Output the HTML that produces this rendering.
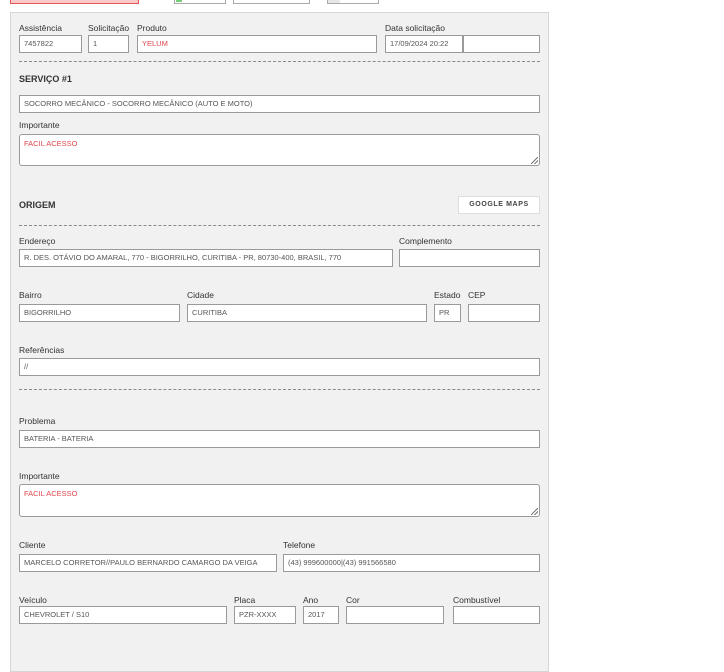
<!DOCTYPE html>
<html><head><meta charset="utf-8">
<style>
*{box-sizing:border-box;margin:0;padding:0}
body{width:724px;height:664px;background:#fff;position:relative;overflow:hidden;font-family:"Liberation Sans",sans-serif;color:#333}
.a{position:absolute}
.panel{left:10px;top:12px;width:539px;height:660px;background:#f1f1f1;border:1px solid #d6d6d6}
.l{position:absolute;font-size:8.5px;color:#333;line-height:10px;white-space:nowrap}
.i{position:absolute;height:18px;background:#fff;border:1px solid #9a9a9a;font-size:7.5px;line-height:16px;padding-left:4px;color:#555;white-space:nowrap;overflow:hidden}
.t{position:absolute;background:#fff;border:1px solid #9a9a9a;border-radius:3px;font-size:7.5px;padding:4px 4px;color:#e0474c}
.d{position:absolute;left:19px;width:521px;border-top:1px dashed #8a8a8a}
.h{position:absolute;font-size:9px;font-weight:bold;color:#333}
.red{color:#e0474c}
.grip{position:absolute;right:1px;bottom:1px;width:7px;height:7px;background:linear-gradient(135deg,transparent 45%,#777 45%,#777 55%,transparent 55%,transparent 70%,#777 70%,#777 80%,transparent 80%)}
</style></head><body>
<div class="a" style="left:10px;top:-2px;width:129px;height:6px;background:#f9c9c9;border:1px solid #e05555"></div>
<div class="a" style="left:174px;top:-2px;width:52px;height:6px;background:#fff;border:1px solid #aaa"></div>
<div class="a" style="left:176px;top:-2px;width:6px;height:4px;background:#7c7"></div>
<div class="a" style="left:233px;top:-2px;width:77px;height:6px;background:#fff;border:1px solid #aaa"></div>
<div class="a" style="left:327px;top:-2px;width:52px;height:6px;background:#fff;border:1px solid #aaa"></div>
<div class="a" style="left:328px;top:-2px;width:12px;height:5px;background:#e6e6e6"></div>
<div class="a panel"></div>

<div class="l" style="left:19px;top:23px">Assistência</div>
<div class="l" style="left:88px;top:23px">Solicitação</div>
<div class="l" style="left:137px;top:23px">Produto</div>
<div class="l" style="left:385px;top:23px">Data solicitação</div>
<div class="i" style="left:19px;top:35px;width:63px">7457822</div>
<div class="i" style="left:88px;top:35px;width:41px">1</div>
<div class="i red" style="left:137px;top:35px;width:240px;color:#e0474c">YELUM</div>
<div class="i" style="left:385px;top:35px;width:78px">17/09/2024 20:22</div>
<div class="i" style="left:463px;top:35px;width:77px"></div>
<div class="d" style="top:61px"></div>

<div class="h" style="left:19px;top:74px">SERVIÇO #1</div>
<div class="i" style="left:19px;top:95px;width:521px">SOCORRO MECÂNICO - SOCORRO MECÂNICO (AUTO E MOTO)</div>
<div class="l" style="left:19px;top:120px">Importante</div>
<div class="t" style="left:19px;top:134px;width:521px;height:32px">FACIL ACESSO<div class="grip"></div></div>

<div class="h" style="left:19px;top:200px">ORIGEM</div>
<div class="a" style="left:458px;top:196px;width:82px;height:18px;background:#fff;border:1px solid #ddd;font-size:7px;font-weight:bold;letter-spacing:0.6px;text-align:center;line-height:16px;color:#444">GOOGLE MAPS</div>
<div class="d" style="top:225px"></div>

<div class="l" style="left:19px;top:236px">Endereço</div>
<div class="l" style="left:399px;top:236px">Complemento</div>
<div class="i" style="left:19px;top:249px;width:374px">R. DES. OTÁVIO DO AMARAL, 770 - BIGORRILHO, CURITIBA - PR, 80730-400, BRASIL, 770</div>
<div class="i" style="left:399px;top:249px;width:141px"></div>

<div class="l" style="left:19px;top:290px">Bairro</div>
<div class="l" style="left:187px;top:290px">Cidade</div>
<div class="l" style="left:434px;top:290px">Estado</div>
<div class="l" style="left:468px;top:290px">CEP</div>
<div class="i" style="left:19px;top:304px;width:161px">BIGORRILHO</div>
<div class="i" style="left:187px;top:304px;width:240px">CURITIBA</div>
<div class="i" style="left:434px;top:304px;width:27px">PR</div>
<div class="i" style="left:468px;top:304px;width:72px"></div>

<div class="l" style="left:19px;top:345px">Referências</div>
<div class="i" style="left:19px;top:358px;width:521px">//</div>
<div class="d" style="top:389px"></div>

<div class="l" style="left:19px;top:416px">Problema</div>
<div class="i" style="left:19px;top:430px;width:521px">BATERIA - BATERIA</div>
<div class="l" style="left:19px;top:471px">Importante</div>
<div class="t" style="left:19px;top:484px;width:521px;height:33px">FACIL ACESSO<div class="grip"></div></div>

<div class="l" style="left:19px;top:540px">Cliente</div>
<div class="l" style="left:283px;top:540px">Telefone</div>
<div class="i" style="left:19px;top:554px;width:258px">MARCELO CORRETOR//PAULO BERNARDO CAMARGO DA VEIGA</div>
<div class="i" style="left:283px;top:554px;width:257px">(43) 999600000|(43) 991566580</div>

<div class="l" style="left:19px;top:595px">Veículo</div>
<div class="l" style="left:234px;top:595px">Placa</div>
<div class="l" style="left:303px;top:595px">Ano</div>
<div class="l" style="left:346px;top:595px">Cor</div>
<div class="l" style="left:453px;top:595px">Combustível</div>
<div class="i" style="left:19px;top:606px;width:208px">CHEVROLET / S10</div>
<div class="i" style="left:234px;top:606px;width:62px">PZR-XXXX</div>
<div class="i" style="left:303px;top:606px;width:36px">2017</div>
<div class="i" style="left:346px;top:606px;width:98px"></div>
<div class="i" style="left:453px;top:606px;width:87px"></div>
</body></html>
